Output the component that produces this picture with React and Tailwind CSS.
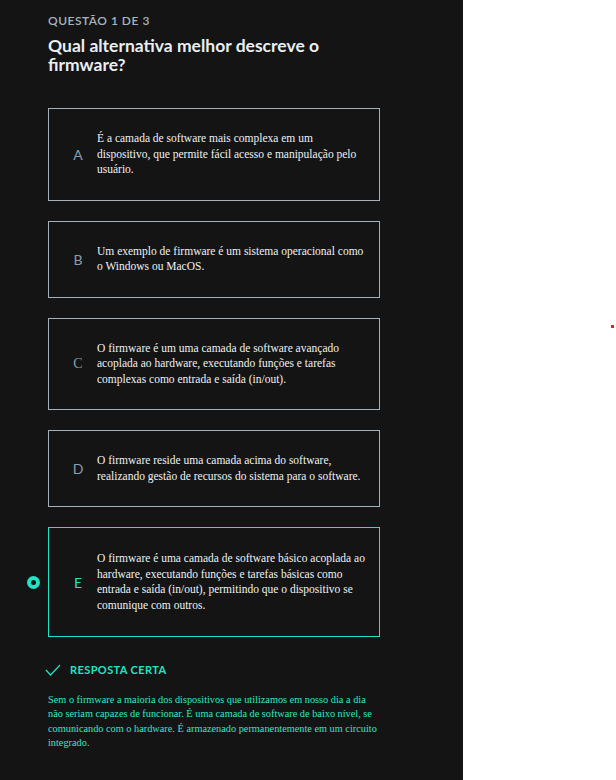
import React from "react";

const options = [
  {
    letter: "A",
    text: "É a camada de software mais complexa em um dispositivo, que permite fácil acesso e manipulação pelo usuário.",
  },
  {
    letter: "B",
    text: "Um exemplo de firmware é um sistema operacional como o Windows ou MacOS.",
  },
  {
    letter: "C",
    serif: true,
    text: "O firmware é um uma camada de software avançado acoplada ao hardware, executando funções e tarefas complexas como entrada e saída (in/out).",
  },
  {
    letter: "D",
    text: "O firmware reside uma camada acima do software, realizando gestão de recursos do sistema para o software.",
  },
  {
    letter: "E",
    selected: true,
    text: "O firmware é uma camada de software básico acoplada ao hardware, executando funções e tarefas básicas como entrada e saída (in/out), permitindo que o dispositivo se comunique com outros.",
  },
];

function Option({ letter, text, selected, serif }) {
  return (
    <div className="flex items-center">
      <div className="w-[48px] flex pl-[27px]">
        {selected && <div className="w-[13px] h-[13px] rounded-full border-[4px] border-[#22e3c3]" />}
      </div>
      <div
        className={
          "w-[332px] flex items-center py-[22px] pl-[17px] pr-[12px] border " +
          (selected ? "border-[#22e3c3] py-[23px]" : "border-[#a3b1ba]")
        }
      >
        <span
          className={
            "w-[24px] shrink-0 text-center text-[14px] " +
            (serif ? "font-['Liberation_Serif',serif] " : "font-['Lato',sans-serif] ") +
            (selected ? "text-[#22e3c3]" : "text-[#8c9dab]")
          }
        >
          {letter}
        </span>
        <p className="ml-[7px] text-[11.5px] leading-[15.5px] text-[#eef2f4] font-['Liberation_Serif',serif]">{text}</p>
      </div>
    </div>
  );
}

export default function App() {
  return (
    <div className="relative w-[616px] h-[780px] bg-white flex">
      <div className="w-[463px] h-[780px] bg-[#141414] pt-[12px]">
        <div className="pl-[48px] pr-[60px]">
          <div className="text-[12px] font-semibold tracking-[0.5px] text-[#a5b4c0] font-['Lato',sans-serif]">
            QUESTÃO 1 DE 3
          </div>
          <h1 className="mt-[6px] text-[17.5px] leading-[19px] font-bold text-[#e9eef2] font-['Lato',sans-serif]">
            Qual alternativa melhor descreve o<br />firmware?
          </h1>
        </div>
        <div className="mt-[34px] flex flex-col gap-[20px]">
          {options.map(o => (
            <Option key={o.letter} {...o} />
          ))}
        </div>
        <div className="pl-[45px] mt-[25px] flex items-center gap-[9px]">
          <svg width="16" height="12" viewBox="0 0 16 12" fill="none">
            <path d="M1 6l4.5 5L15 1" stroke="#22e3c3" strokeWidth="1.2" />
          </svg>
          <span className="text-[11px] font-bold tracking-[0.4px] text-[#22e3c3] font-['Lato',sans-serif]">
            RESPOSTA CERTA
          </span>
        </div>
        <p className="ml-[48px] mt-[14px] w-[332px] text-[10.3px] leading-[14.5px] text-[#2ee6c6] font-['Liberation_Serif',serif]">
          Sem o firmware a maioria dos dispositivos que utilizamos em nosso dia a dia não seriam capazes de
          funcionar. É uma camada de software de baixo nível, se comunicando com o hardware. É armazenado
          permanentemente em um circuito integrado.
        </p>
      </div>
      <div className="absolute left-[611px] top-[325px] w-[3px] h-[3px] bg-[#ee1c1c]" />
    </div>
  );
}
